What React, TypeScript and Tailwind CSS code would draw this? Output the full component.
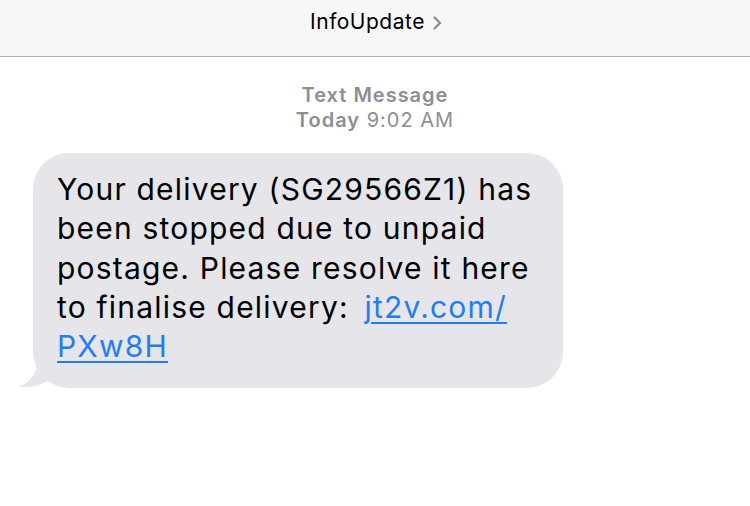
import React from 'react';

const font = { fontFamily: 'Inter, "Liberation Sans", sans-serif' };

export default function App() {
  return (
    <div className="w-[750px] h-[506px] bg-white overflow-hidden" style={font}>
      <header className="h-[57px] bg-[#f7f7f7] border-b border-[#b2b2b2] flex items-center justify-center">
        <div className="flex items-center gap-[8px] pb-[12px] pl-[2px]">
          <span className="text-[21px] text-black tracking-[0.5px]">InfoUpdate</span>
          <svg width="9" height="14" viewBox="0 0 9 14" className="mt-[2px]">
            <path d="M1.5 1.5 L7 7 L1.5 12.5" fill="none" stroke="#8e8e93" strokeWidth="2.4" strokeLinecap="round" strokeLinejoin="round" />
          </svg>
        </div>
      </header>

      <div className="flex flex-col items-center pt-[26px] text-[#8e8e93] text-[20px] leading-[25px] tracking-[1px]">
        <span className="font-semibold">Text Message</span>
        <span>
          <span className="font-semibold">Today</span> 9:02 AM
        </span>
      </div>

      <div className="relative ml-[33px] mt-[20px] w-[530px]">
        <div className="bg-[#e5e5ea] rounded-[36px] pl-[24px] pr-[16px] pt-[17px] pb-[22px] text-[30px] leading-[39.25px] tracking-[1.2px] text-black relative z-10">
          Your delivery (SG29566Z1) has
          <br />
          been stopped due to unpaid
          <br />
          postage. Please resolve it here
          <br />
          to finalise delivery:{' '}
          <span className="ml-[6px] text-[#1f7ff2] underline decoration-[2px] underline-offset-[4px]">jt2v.com/</span>
          <br />
          <span className="text-[#1f7ff2] underline decoration-[2px] underline-offset-[4px]">PXw8H</span>
        </div>
        <svg className="absolute left-[-14px] bottom-[-1px]" width="40" height="36" viewBox="0 0 40 36">
          <path d="M20 0 C20 16 14 28 0 34 C12 35 24 32 32 25 L40 10 Z" fill="#e5e5ea" />
        </svg>
      </div>
    </div>
  );
}
